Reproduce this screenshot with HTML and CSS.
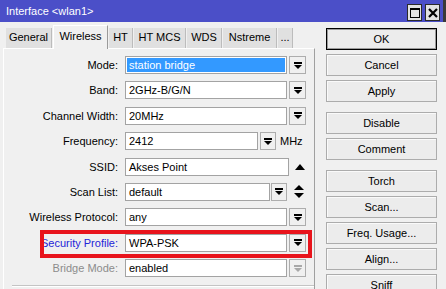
FILE: index.html
```html
<!DOCTYPE html>
<html lang="en">

<head>
    <meta charset="UTF-8">
    <title>Interface &lt;wlan1&gt;</title>
    <link rel="stylesheet" href="styles.css">
</head>

<body>
    <div class="window">
        <div class="titlebar">
            <span class="title">Interface &lt;wlan1&gt;</span>
            <span class="tbtn">
                <svg width="10" height="10" viewBox="0 0 10 10"><rect x="0.5" y="0.5" width="9" height="9" fill="none" stroke="#000" /><rect x="0" y="0" width="10" height="2" fill="#000" /></svg>
            </span>
            <span class="tbtn">
                <svg width="10" height="10" viewBox="0 0 10 10"><path d="M1 1 L9 9 M9 1 L1 9" stroke="#000" stroke-width="2.2" /></svg>
            </span>
        </div>

        <div class="main">
            <div class="left">
                <div class="tabs">
                    <div class="tab" style="width: 46px">General</div>
                    <div class="tab active" style="width: 55px">Wireless</div>
                    <div class="tab" style="width: 24px">HT</div>
                    <div class="tab" style="width: 52px">HT MCS</div>
                    <div class="tab" style="width: 35px">WDS</div>
                    <div class="tab" style="width: 54px">Nstreme</div>
                    <div class="tab" style="width: 15px">...</div>
                </div>

                <div class="panel">
                    <div class="row">
                        <label>Mode:</label>
                        <div class="field selected">station bridge</div>
                        <div class="drop"><svg width="8" height="7" viewBox="0 0 8 7"><rect width="8" height="2" /><polygon points="0,3 8,3 4,7" /></svg></div>
                    </div>
                    <div class="row">
                        <label>Band:</label>
                        <div class="field">2GHz-B/G/N</div>
                        <div class="drop"><svg width="8" height="7" viewBox="0 0 8 7"><rect width="8" height="2" /><polygon points="0,3 8,3 4,7" /></svg></div>
                    </div>
                    <div class="row">
                        <label>Channel Width:</label>
                        <div class="field">20MHz</div>
                        <div class="drop"><svg width="8" height="7" viewBox="0 0 8 7"><rect width="8" height="2" /><polygon points="0,3 8,3 4,7" /></svg></div>
                    </div>
                    <div class="row">
                        <label>Frequency:</label>
                        <div class="field freq">2412</div>
                        <div class="drop narrow"><svg width="8" height="7" viewBox="0 0 8 7"><rect width="8" height="2" /><polygon points="0,3 8,3 4,7" /></svg></div>
                        <span class="unit">MHz</span>
                    </div>
                    <div class="row">
                        <label>SSID:</label>
                        <div class="field ssid">Akses Point</div>
                        <span class="arrows"><svg width="10" height="6" viewBox="0 0 10 6"><polygon points="0,6 10,6 5,0" /></svg></span>
                    </div>
                    <div class="row">
                        <label>Scan List:</label>
                        <div class="field scan">default</div>
                        <div class="drop narrow tight"><svg width="8" height="7" viewBox="0 0 8 7"><rect width="8" height="2" /><polygon points="0,3 8,3 4,7" /></svg></div>
                        <span class="arrows updown"><svg width="10" height="13" viewBox="0 0 10 13"><polygon points="0,5 10,5 5,0" /><polygon points="0,8 10,8 5,13" /></svg></span>
                    </div>
                    <div class="row">
                        <label>Wireless Protocol:</label>
                        <div class="field">any</div>
                        <div class="drop"><svg width="8" height="7" viewBox="0 0 8 7"><rect width="8" height="2" /><polygon points="0,3 8,3 4,7" /></svg></div>
                    </div>
                    <div class="row highlight">
                        <label class="link">Security Profile:</label>
                        <div class="field">WPA-PSK</div>
                        <div class="drop"><svg width="8" height="7" viewBox="0 0 8 7"><rect width="8" height="2" /><polygon points="0,3 8,3 4,7" /></svg></div>
                    </div>
                    <div class="row disabled">
                        <label>Bridge Mode:</label>
                        <div class="field">enabled</div>
                        <div class="drop"><svg width="8" height="7" viewBox="0 0 8 7"><rect width="8" height="2" /><polygon points="0,3 8,3 4,7" /></svg></div>
                    </div>
                    <div class="status"></div>
                </div>
            </div>

            <div class="buttons">
                <button class="default">OK</button>
                <button>Cancel</button>
                <button>Apply</button>
                <button class="group">Disable</button>
                <button>Comment</button>
                <button class="group">Torch</button>
                <button>Scan...</button>
                <button>Freq. Usage...</button>
                <button>Align...</button>
                <button>Sniff</button>
            </div>
        </div>
    </div>
</body>

</html>
```

FILE: styles.css
```css
body {
    margin: 0;
    padding: 0;
    background-color: #f0f0f0;
    font-family: "Liberation Sans", Arial, sans-serif;
    font-size: 11px;
    color: #000;
}

.window {
    width: 446px;
    height: 289px;
    overflow: hidden;
}

.titlebar {
    height: 22px;
    background-color: #4b4fc8;
    border-right: 3px solid #3a3a3a;
    display: flex;
    align-items: center;
    padding-left: 6px;
    box-sizing: border-box;
}

.title {
    color: #fff;
    flex: 1;
}

.tbtn {
    width: 13px;
    height: 15px;
    margin-right: 3px;
    margin-top: 3px;
    background-color: #e2e2e2;
    border: 1px solid #2a2a2a;
    display: flex;
    align-items: center;
    justify-content: center;
}

.main {
    display: flex;
    height: 267px;
}

.left {
    width: 315px;
    padding-left: 3px;
    box-sizing: border-box;
}

.tabs {
    height: 26px;
    display: flex;
    align-items: flex-end;
    padding-left: 3px;
}

.tab {
    height: 20px;
    background-color: #e0e0e0;
    border-right: 1px solid #bcbcbc;
    text-align: center;
    line-height: 19px;
    box-sizing: border-box;
    margin-right: 1px;
}

.tab.active {
    height: 24px;
    background-color: #f0f0f0;
    border-left: 1px solid #fff;
    border-top: 1px solid #fff;
    border-right: 1px solid #9a9a9a;
    margin-bottom: -1px;
    line-height: 20px;
    position: relative;
}

.panel {
    height: 241px;
    border-top: 1px solid #fff;
    border-left: 1px solid #fff;
    border-right: 1px solid #a0a0a0;
    padding-top: 7px;
    box-sizing: border-box;
}

.row {
    display: flex;
    align-items: center;
    height: 18px;
    margin-bottom: 7.4px;
}

.row label {
    width: 114px;
    text-align: right;
    margin-right: 7px;
}

.row label.link {
    color: #2424d8;
}

.field {
    width: 162px;
    height: 18px;
    box-sizing: border-box;
    border: 1px solid #a3a3a3;
    background-color: #fff;
    padding-left: 3px;
    line-height: 16px;
}

.field.selected {
    background-color: #3399ff;
    color: #fff;
    box-shadow: inset 0 0 0 1px #fff;
}

.field.freq {
    width: 133px;
}

.field.ssid {
    width: 164px;
}

.field.scan {
    width: 145px;
}

.drop {
    width: 17px;
    height: 18px;
    margin-left: 2px;
    box-sizing: border-box;
    border: 1px solid #adadad;
    background-color: #f0f0f0;
    display: flex;
    align-items: center;
    justify-content: center;
}

.drop.narrow {
    width: 16px;
}

.drop.tight {
    margin-left: 1px;
}

.unit {
    margin-left: 4px;
}

.arrows {
    margin-left: 6px;
    display: flex;
}

.arrows.updown {
    margin-left: 7px;
}

.highlight {
    position: relative;
}

/* red annotation frame drawn over the row */
.highlight::after {
    content: "";
    position: absolute;
    left: 36px;
    top: -4px;
    width: 272px;
    height: 28px;
    box-sizing: border-box;
    border: 4px solid #e8141c;
}

.disabled label {
    color: #8c8c8c;
}

.disabled .drop svg {
    fill: #a8a8a8;
}

.status {
    margin-left: 8px;
    margin-top: 0px;
    border-top: 1px solid #c4c4c4;
    border-bottom: 1px solid #fff;
}

.buttons {
    display: flex;
    flex-direction: column;
    margin-left: 11px;
    padding-top: 6px;
    width: 111px;
}

button {
    flex-shrink: 0;
    height: 22px;
    margin-bottom: 4px;
    font-family: "Liberation Sans", Arial, sans-serif;
    font-size: 11px;
    color: #000;
    background-color: #ececec;
    border: 1px solid #acacac;
    box-shadow: inset 1px 1px 0 #fafafa;
    padding: 0;
}

button.default {
    border: 1px solid #000;
    box-shadow: inset 0 0 0 1px #9c9c9c;
}

button.group {
    margin-top: 6px;
}
```
